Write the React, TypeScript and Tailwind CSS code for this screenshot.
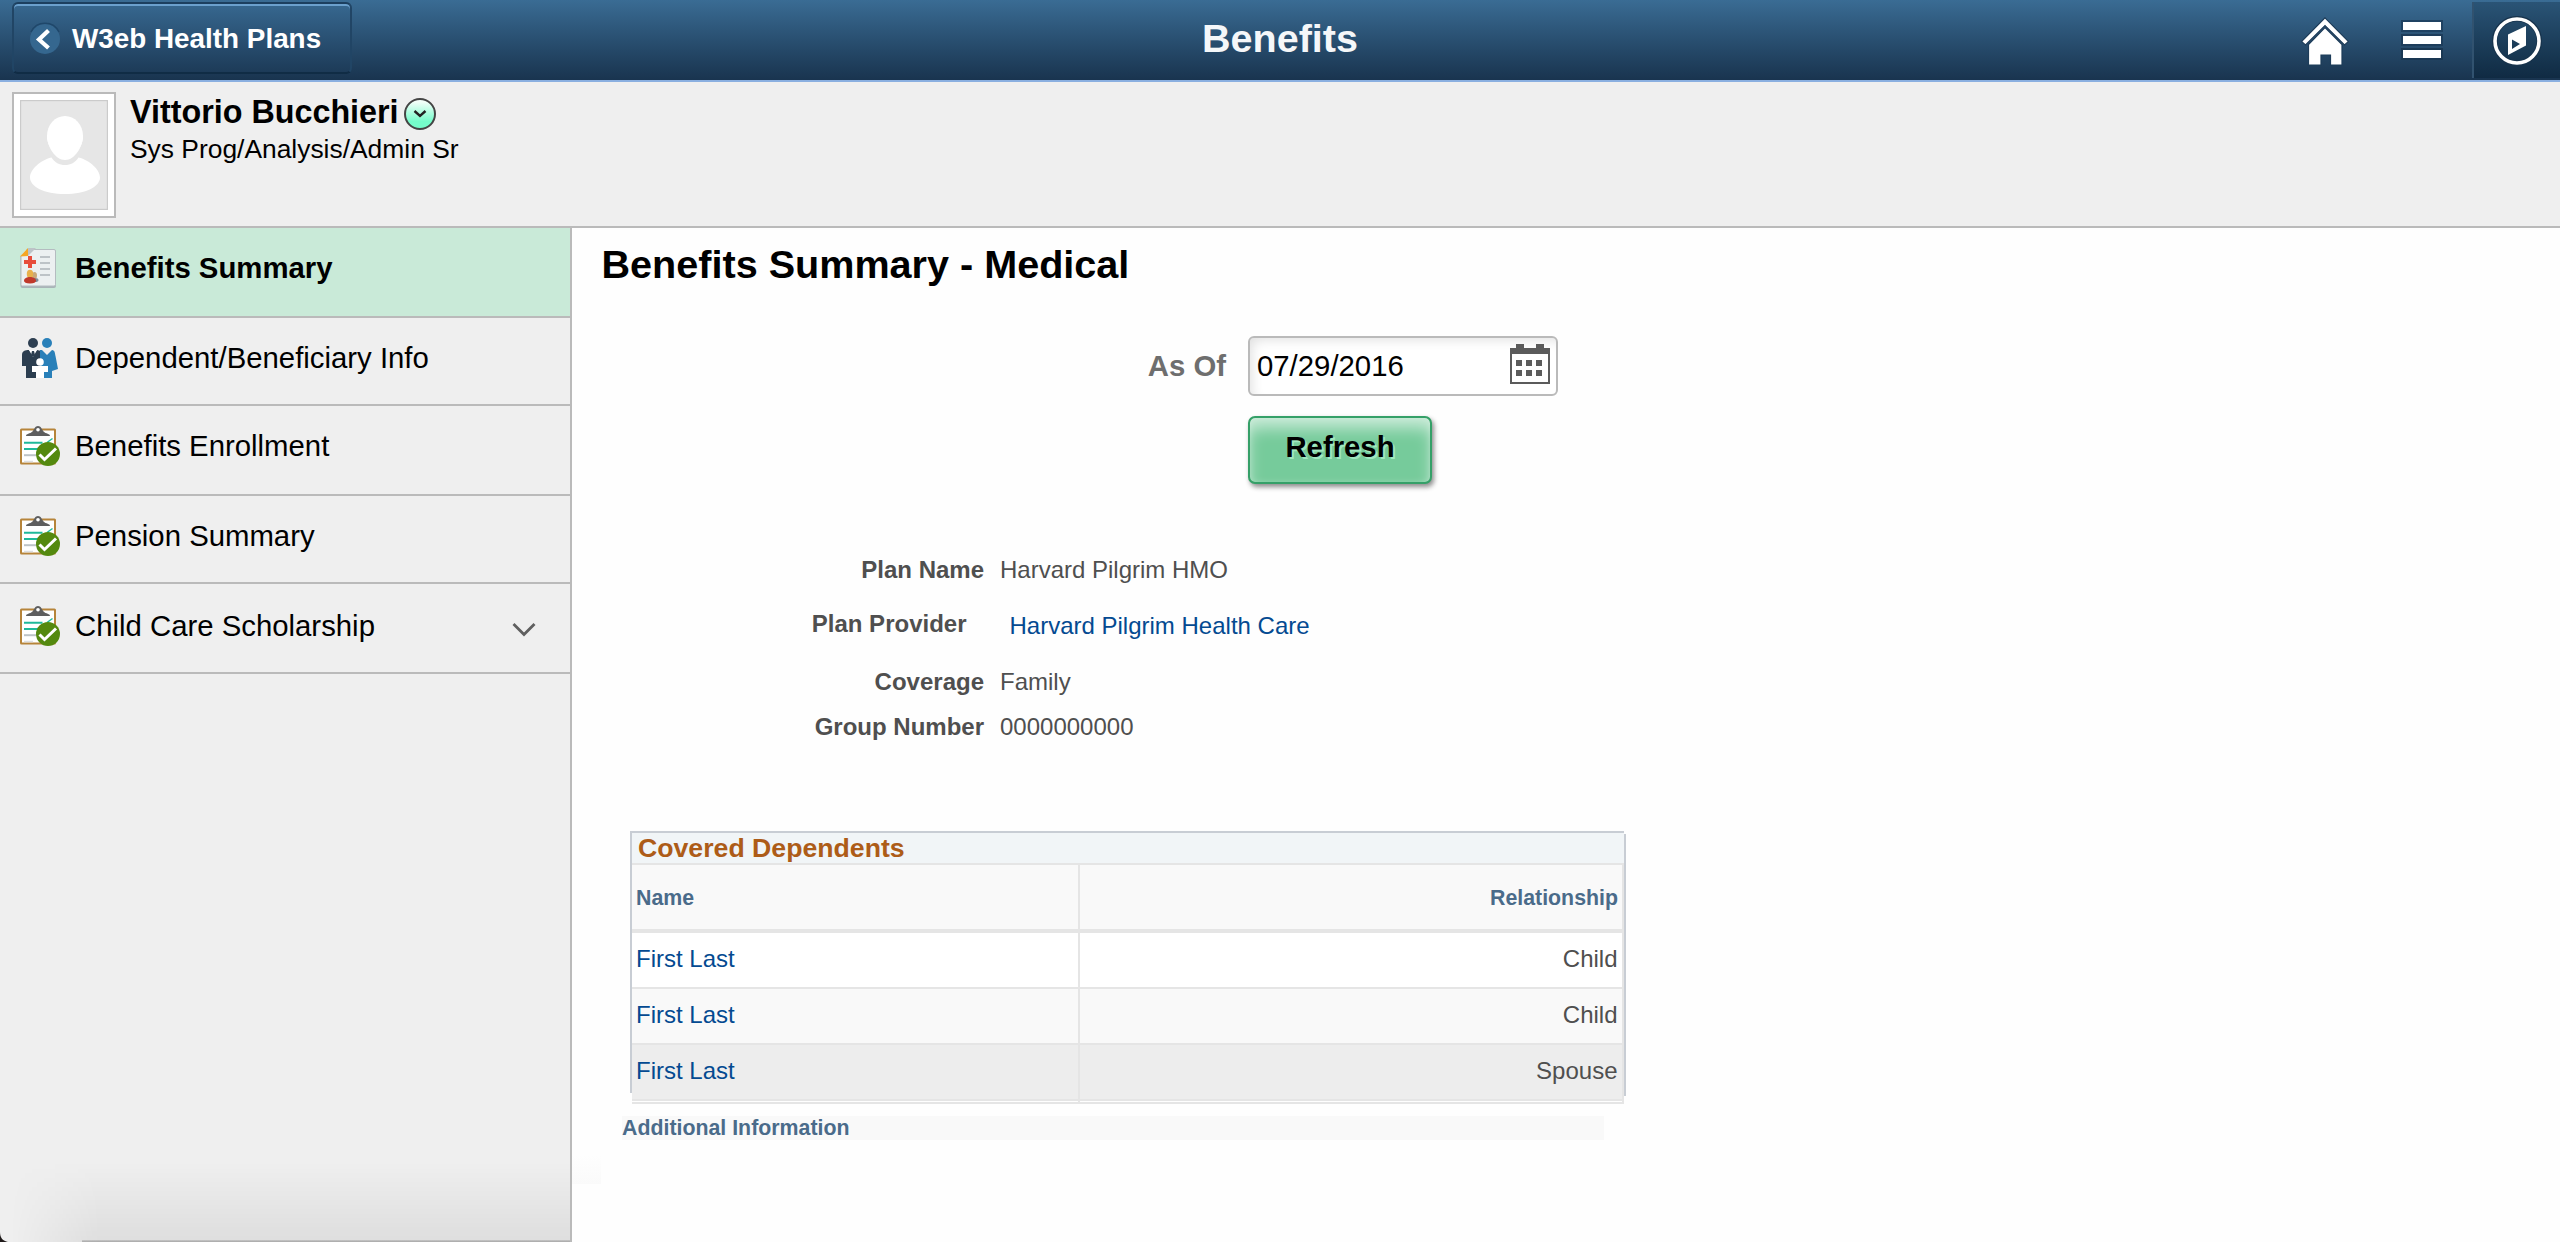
import React from "react";

function ReportIcon() {
  return (
    <svg width="40" height="40" viewBox="0 0 40 40">
      <rect x="0.5" y="2" width="35.5" height="38" rx="2" fill="#a9b4b8" />
      <rect x="1" y="1.5" width="34.5" height="36.5" rx="1.5" fill="#ecf0f1" stroke="#b4bcc0" strokeWidth="1" />
      <path d="M0 0h8L0 8.500z" fill="#c9ead8" />
      <path d="M0 8.500 8 0v8z" fill="#f5a623" />
      <path d="M8 0h8L8 8z" fill="#bdc3c7" />
      <path d="M8 8h4v4h4v4h-4v4H8v-4H4v-4h4z" fill="#e74c3c" />
      <path d="M20 9h10M20 15h10M20 21h10M20 27h10" stroke="#bdc3c7" strokeWidth="2" />
      <ellipse cx="14.500" cy="27.500" rx="2.500" ry="3.500" fill="#c9a878" />
      <ellipse cx="15" cy="32" rx="3.500" ry="2" fill="#7f8c9a" />
      <ellipse cx="10" cy="26" rx="3.200" ry="4.200" fill="#e8b04b" />
      <path d="M4 33c0-3 3-4 6-4s6 1 6 4c0 1-2 2.500-6 2.500S4 34 4 33z" fill="#c0392b" />
    </svg>
  );
}

function FamilyIcon() {
  return (
    <svg width="40" height="40" viewBox="0 0 40 40">
      <ellipse cx="13" cy="5" rx="5" ry="5" fill="#2c3e50" />
      <ellipse cx="27" cy="5" rx="5" ry="5" fill="#2980b9" />
      <path d="M2 28V17c0-4 3-5 7-5l4 5 4-5 4 1v27H6V28z" fill="#2c3e50" />
      <path d="M9 12h8l-4 7z" fill="#fff" />
      <path d="M12 13h2l1 4-2 2-2-2z" fill="#2c3e50" />
      <path d="M20 12h2l5 5 5-5c3 0 3 4 3.500 6L38 31l-6 2v7H20z" fill="#2980b9" />
      <circle cx="20" cy="24" r="3.800" fill="#fff" />
      <path d="M12 28h16v6h-4v6h-8v-6h-4z" fill="#fff" />
    </svg>
  );
}

function ClipboardIcon() {
  return (
    <svg width="40" height="40" viewBox="0 0 40 40">
      <rect x="1" y="3.500" width="34" height="34" rx="0.500" fill="#fff" stroke="#b6843a" strokeWidth="2" />
      <path d="M6 10c0-2.500 4-2 6.500-4.500C14.500 3 15 0 18 0s3.500 3 5.500 5.500C26 8 30 7.500 30 10z" fill="#5e5e5e" />
      <circle cx="18" cy="3.800" r="1.800" fill="#fff" />
      <path d="M4 16.700h18.500M4 23h14.500" stroke="#1fb99a" strokeWidth="2" />
      <path d="M27 16.500l5.500-4" stroke="#1fb99a" strokeWidth="1.500" />
      <path d="M4 29.200h12" stroke="#bdc3c7" strokeWidth="2" />
      <path d="M4 35.500h9" stroke="#dcdfe1" strokeWidth="1.500" />
      <circle cx="28" cy="28" r="12" fill="#54890f" />
      <path d="M19.500 28.500l5 5L36 22.500" fill="none" stroke="#fff" strokeWidth="3" />
    </svg>
  );
}

const navItems = [
  { label: "Benefits Summary", icon: <ReportIcon />, className: "h-[90px] pt-[20px] bg-[#c9ead8] font-bold" },
  { label: "Dependent/Beneficiary Info", icon: <FamilyIcon />, className: "h-[88px] pt-[20px]" },
  { label: "Benefits Enrollment", icon: <ClipboardIcon />, className: "h-[90px] pt-[20px]" },
  { label: "Pension Summary", icon: <ClipboardIcon />, className: "h-[88px] pt-[20px]" },
  { label: "Child Care Scholarship", icon: <ClipboardIcon />, className: "h-[90px] pt-[22px]", expandable: true },
];

const dependents = [
  { name: "First Last", relationship: "Child", className: "bg-white" },
  { name: "First Last", relationship: "Child", className: "bg-[#f9f9f9]" },
  { name: "First Last", relationship: "Spouse", className: "bg-[#ededed]" },
];

function Header() {
  return (
    <header className="grid h-[82px] shrink-0 grid-cols-[1fr_auto_1fr] border-b-2 border-[#8aafe0] bg-linear-to-b from-[#3a6c94] to-[#19344f]">
      <div className="pl-[12px] pt-[2px]">
        <button className="flex h-[72px] w-[340px] items-center rounded-[6px] border-2 border-t-[#1c3f5f] border-x-[#214565] border-b-[#102c45] bg-linear-to-b from-[#376890] to-[#1d3b58] pl-[16px] shadow-[inset_0_2px_0_#6ba0cd]">
          <svg width="30" height="32" viewBox="0 0 30 32" className="shrink-0">
            <circle cx="15" cy="17" r="15" fill="#35678f" />
            <path d="M1 10A15.500 15.500 0 0 1 29 10" fill="none" stroke="#1f476a" strokeWidth="1.500" />
            <path d="M18.500 8.500 9 17.500l9.500 8.500" fill="none" stroke="#fff" strokeWidth="4.200" />
          </svg>
          <span className="ml-[12px] pt-[2px] whitespace-nowrap text-[27.85px] leading-[32px] font-bold text-white">W3eb Health Plans</span>
        </button>
      </div>
      <h1 className="text-[39.5px] leading-[76px] font-bold text-[#f5f7f9]">Benefits</h1>
      <div className="flex justify-end">
        <svg width="48" height="50" viewBox="0 0 48 50" className="mt-[17px] mr-[52px]">
          <g fill="#fff" stroke="#1d3c59" strokeWidth="1.200">
            <path d="M24 .8 47.500 24.500l-4 3.500L24 8.500 4.500 28 .5 24.500z" />
            <path d="M24 10.500 41 27.500V48H29.500V38h-9.500v10H7.500V27.500z" />
          </g>
        </svg>
        <div className="mt-[20px] mr-[29px] flex h-[40px] w-[42px] flex-col justify-between">
          <div className="h-[12px] border-2 border-[#1f4262] bg-white" />
          <div className="h-[12px] border-2 border-[#1d3d5b] bg-white" />
          <div className="h-[12px] border-2 border-[#1a3853] bg-white" />
        </div>
        <div className="mt-[2px] flex h-[76px] w-[88px] border-l-2 border-[#31526f] bg-linear-to-b from-[#2a5476] to-[#102b43] pt-[14px] pl-[18px]">
          <svg width="50" height="50" viewBox="0 0 50 50">
            <circle cx="25" cy="25" r="22.300" fill="none" stroke="#17334c" strokeWidth="5.500" />
            <circle cx="25" cy="25" r="22" fill="none" stroke="#fff" strokeWidth="3.600" />
            <path fillRule="evenodd" fill="#fff" d="M34 10 16 18.500V39L34 29.500zM20 23.500 28 28l-8 5z" />
          </svg>
        </div>
      </div>
    </header>
  );
}

function Banner() {
  return (
    <section className="flex h-[146px] shrink-0 border-b-2 border-[#bababa] bg-[#efefef] pt-[10px] pl-[12px]">
      <div className="h-[126px] w-[104px] border-2 border-[#bababa] bg-white p-[6px]">
        <svg width="88" height="110" viewBox="0 0 88 110">
          <rect x="0.600" y="0.600" width="86.800" height="108.800" fill="#e6e6e6" stroke="#cbcbcb" strokeWidth="1.200" />
          <ellipse cx="45" cy="36" rx="18" ry="20" fill="#fff" />
          <path d="M27 36c0 10 8 24 18 24s18-14 18-24z" fill="#fff" />
          <path d="M31.500 57.500c3 5 8 7.500 13.500 7.500s10.500-2.500 13.500-7.500C70 60 80 70 80 77.500c0 9-14 16.500-35 16.500S10 86.500 10 77.500C10 70 20 60 31.500 57.500z" fill="#fff" />
        </svg>
      </div>
      <div className="pl-[14px]">
        <div className="flex h-[40px] items-center">
          <span className="w-[268px] whitespace-nowrap text-[32.3px] leading-[41px] font-bold">Vittorio Bucchieri</span>
          <svg width="32" height="32" viewBox="0 0 32 32" className="mt-[4px] ml-[6px]">
            <defs>
              <linearGradient id="mint" x1="0" y1="0" x2="0" y2="1">
                <stop offset="0.100" stopColor="#f2fff9" />
                <stop offset="0.750" stopColor="#75fcca" />
              </linearGradient>
            </defs>
            <circle cx="16" cy="16" r="15" fill="url(#mint)" stroke="#444" strokeWidth="2" />
            <path d="m10.500 13 5.500 5 5.500-5" fill="none" stroke="#222" strokeWidth="2.400" />
          </svg>
        </div>
        <div className="text-[26.4px] leading-[34px]">Sys Prog/Analysis/Admin Sr</div>
      </div>
    </section>
  );
}

function Sidebar() {
  return (
    <nav className="relative w-[572px] shrink-0 border-r-2 border-[#bababa] bg-[#efefef]">
      {navItems.map((item) => (
        <div key={item.label} className={"flex items-start border-b-2 border-[#bababa] pl-[20px] text-[29.33px] leading-[40px] " + item.className}>
          {item.icon}
          <span className="ml-[15px] grow whitespace-nowrap">{item.label}</span>
          {item.expandable && (
            <svg width="24" height="16" viewBox="0 0 24 16" className="mt-[16px] mr-[34px]">
              <path d="m1.500 2 10.500 10.500L22.500 2" fill="none" stroke="#5f5f5f" strokeWidth="2.800" />
            </svg>
          )}
        </div>
      ))}
      <div className="absolute bottom-0 left-0 h-[80px] w-[570px] bg-linear-to-b from-black/0 to-black/7 mask-linear-[90deg,transparent_10px,black_100px]" />
      <div className="absolute right-0 bottom-0 h-[2px] w-[488px] bg-linear-to-b from-black/10 to-black/25" />
      <svg width="8" height="10" viewBox="0 0 8 10" className="absolute bottom-0 left-0">
        <path d="M0 0c0 6 3 9 8 10H0z" fill="#1f1a1a" />
      </svg>
    </nav>
  );
}

function DependentsTable() {
  return (
    <div className="relative ml-[58px] h-[273px] w-[996px]">
      <div className="absolute top-0 left-0 h-[262px] w-[994px] border-t-2 border-l-2 border-[#c8cdd4]" />
      <div className="absolute top-[3px] right-0 h-[262px] w-[2px] bg-[#c8cdd4]" />
      <div className="relative mr-[2px] ml-[2px] pt-[2px]">
        <div className="h-[32px] border-b-2 border-[#e5e5e5] bg-[#f1f5f7] pl-[6px] text-[26.67px] leading-[30px] font-bold text-[#ad5c18]">
          Covered Dependents
        </div>
        <div className="border-r-2 border-b-2 border-[#e5e5e5]">
          <div className="grid h-[68px] grid-cols-[448px_1fr] border-b-4 border-[#e5e5e5] bg-[#f9f9f9] text-[21.33px] leading-[66px] font-bold text-[#4a6b8a]">
            <div className="border-r-2 border-[#e5e5e5] pl-[4px]">Name</div>
            <div className="pr-[4px] text-right">Relationship</div>
          </div>
          {dependents.map((d, i) => (
            <div key={i} className={"grid h-[56px] grid-cols-[448px_1fr] border-b-2 border-[#e5e5e5] text-[24px] leading-[52px] " + d.className}>
              <div className="border-r-2 border-[#e5e5e5] pl-[4px] text-[#044a91]">{d.name}</div>
              <div className="pr-[4.5px] text-right text-[#4f4f4f]">{d.relationship}</div>
            </div>
          ))}
          <div className="h-px w-[448px] border-r-2 border-[#e5e5e5]" />
        </div>
      </div>
    </div>
  );
}

function PlanRow({ label, children, className }: { label: string; children: React.ReactNode; className: string }) {
  return (
    <div className={"flex " + className}>
      <div className="w-[412px] text-right font-bold">{label}</div>
      <div className="ml-[16px]">{children}</div>
    </div>
  );
}

function Content() {
  return (
    <main className="grow bg-[#fefefe]">
      <h2 className="pl-[29.5px] text-[39.6px] leading-[72px] font-bold">Benefits Summary - Medical</h2>
      <div className="mt-[36px] flex h-[60px]">
        <label className="mr-[22px] w-[654px] pt-px text-right text-[29.33px] leading-[57px] font-bold text-[#6e6e6e]">As Of</label>
        <div className="flex w-[310px] justify-between rounded-[6px] border-2 border-[#bababa] bg-white pt-[6px] pr-[6px] pl-[7px] shadow-[inset_6px_6px_12px_-4px_rgba(0,0,0,0.12)]">
          <span className="text-[29.33px] leading-[44px]">07/29/2016</span>
          <svg width="40" height="40" viewBox="0 0 40 40">
            <path d="M6 0h8v4h12V0h8v4h6v36H0V4h6z" fill="#5b5b5b" />
            <path d="M2 10h36v28H2z" fill="#fff" />
            <path d="M6 16h6v6H6zM16 16h6v6h-6zM26 16h6v6h-6zM6 26h6v6H6zM16 26h6v6h-6zM26 26h6v6h-6z" fill="#5b5b5b" />
          </svg>
        </div>
      </div>
      <button className="mt-[20px] ml-[676px] block h-[68px] w-[184px] rounded-[7px] border-2 border-[#35a068] bg-[#76cb9b] pb-[6px] text-[29.33px] leading-[58px] font-bold shadow-[2px_3px_5px_rgba(0,0,0,0.45),inset_0_12px_16px_-2px_rgba(255,255,255,0.6),inset_0_0_6px_rgba(255,255,255,0.2)] text-shadow-[2px_2px_0_#a0e8c0]">
        Refresh
      </button>
      <section className="mt-[71px] text-[24px] leading-[30px] text-[#4f4f4f]">
        <PlanRow label="Plan Name" className="h-[54px]">Harvard Pilgrim HMO</PlanRow>
        <PlanRow label="Plan Provider" className="-ml-[17.5px] h-[58px]">
          <a className="block pt-[2px] pl-[27px] text-[#044a91]">Harvard Pilgrim Health Care</a>
        </PlanRow>
        <PlanRow label="Coverage" className="h-[45px]">Family</PlanRow>
        <PlanRow label="Group Number" className="h-[119px]">0000000000</PlanRow>
      </section>
      <DependentsTable />
      <div className="mt-[12px] ml-[50px] h-[24px] w-[982px] bg-[#f9f9f9] text-[21.33px] leading-[25px] font-bold text-[#4a6b8a]">
        Additional Information
      </div>
      <div className="mt-[15px] h-[29px] w-[29px] bg-linear-to-b from-[#fefefe] to-[#fafafa]" />
    </main>
  );
}

export default function App() {
  return (
    <div className="flex h-[1242px] w-[2560px] flex-col overflow-hidden font-['Liberation_Sans',Arial,sans-serif] text-black">
      <Header />
      <Banner />
      <div className="flex min-h-0 grow">
        <Sidebar />
        <Content />
      </div>
    </div>
  );
}
